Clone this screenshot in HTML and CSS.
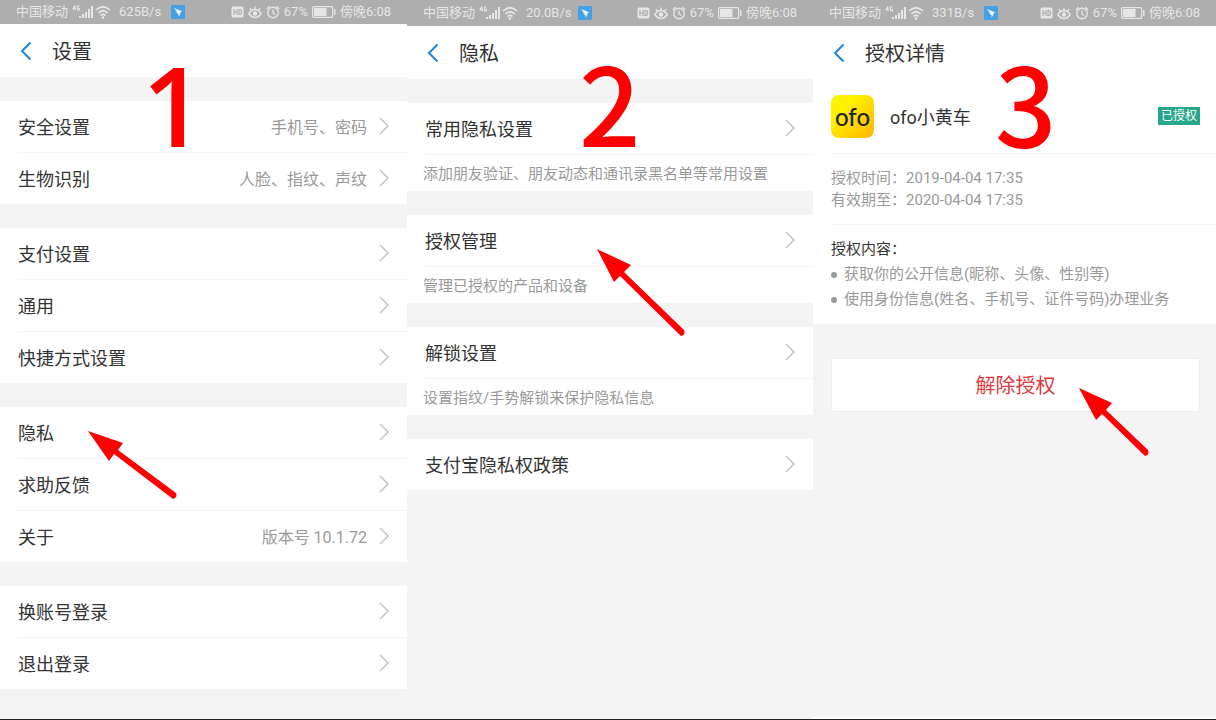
FILE: index.html
```html
<!DOCTYPE html>
<html lang="zh-CN">
<head>
  <meta charset="UTF-8" />
  <title>支付宝解除 ofo 授权步骤</title>
  <meta name="viewport" content="width=device-width, initial-scale=1.0" />
  <link rel="stylesheet" href="styles.css">
</head>
<body>

<!-- Shared icons -->
<svg class="sprite" aria-hidden="true">
  <symbol id="signal" viewBox="0 0 21 16">
    <path fill="none" stroke="currentColor" stroke-width="1.100" d="M3 1.500L1 4.800h3M3 1.500v5M7.500 2H5.500v4h2V4.300h-1" />
    <path fill="currentColor" d="M7 12h2v2H7zM10 10h2v4h-2zM13 8h2v6h-2zM16 5h2v9h-2zM19 2h2v12h-2z" />
  </symbol>
  <symbol id="wifi" viewBox="0 0 16 14">
    <g fill="none" stroke="currentColor" stroke-width="1.700">
      <path d="M1 5Q8 -1.500 15 5M3.300 8Q8 3.500 12.700 8M5.500 10.500Q8 8 10.500 10.500" />
    </g>
    <circle cx="8" cy="12.500" r="1.300" fill="currentColor" />
  </symbol>
  <symbol id="bird" viewBox="0 0 14 14">
    <rect width="14" height="14" rx="1" fill="#45a0e6" />
    <path fill="#eef6fc" d="M3 3l8 3.200-2 1.800.600.800-2.100 2.700V9L6 8.500l.700-.800L4.500 7l1.200-.500z" />
  </symbol>
  <symbol id="hd" viewBox="0 0 13 12">
    <rect x="0.500" y="0.500" width="12" height="11" rx="1.500" fill="currentColor" />
    <path fill="none" stroke="#aeaeae" stroke-width="1.200" d="M3 3v6M6 3v6M3 6h3M8 3.500v5h1q1.500 0 1.500-2.500T9 3.500z" />
  </symbol>
  <symbol id="eye" viewBox="0 0 14 14">
    <path fill="none" stroke="currentColor" stroke-width="1.400" d="M.800 8.500Q3.500 4.500 7 4.500T13.200 8.500Q10.500 12.500 7 12.500T.800 8.500zM7 4.500V1.500M3.500 5.500L2 3M10.500 5.500L12 3" />
    <circle cx="7" cy="8.500" r="2.200" fill="currentColor" />
  </symbol>
  <symbol id="alarm" viewBox="0 0 14 14">
    <g fill="none" stroke="currentColor" stroke-width="1.400">
      <circle cx="7" cy="7.500" r="5.200" />
      <path d="M7 4.500v3.200l2 1.800M.800 4L3.700 1.200M13.200 4l-2.900-2.800" />
    </g>
  </symbol>
  <symbol id="battery" viewBox="0 0 24 12">
    <rect x="0.600" y="0.600" width="20" height="10.800" rx="1" fill="none" stroke="currentColor" stroke-width="1.200" />
    <rect x="2" y="2" width="12.500" height="8" fill="currentColor" />
    <rect x="22" y="3" width="1.500" height="6" fill="currentColor" />
  </symbol>
  <symbol id="back" viewBox="0 0 12 20">
    <path fill="none" stroke="#1a88e0" stroke-width="2" d="M10.500 1.500L2 10l8.500 8.500" />
  </symbol>
  <symbol id="chevron" viewBox="0 0 12 18">
    <path fill="none" stroke="#c4c4c4" stroke-width="1.500" d="M2 1l8 8-8 8" />
  </symbol>
  <symbol id="arrow-flat" viewBox="0 0 90 68">
    <path fill="#f00" d="M0 0l35 12-5 7 58 43q2 4-3 6L26 23l-5 7z" />
  </symbol>
  <symbol id="arrow-steep" viewBox="0 0 90 88">
    <path fill="#f00" d="M0 0l34 16-7 7 60 58q2 5-3 6L23 27l-6 6z" />
  </symbol>
  <symbol id="arrow-short" viewBox="0 0 72 70">
    <path fill="#f00" d="M0 0l33 15-6 7 42 40q2 5-3 6L23 26l-6 6z" />
  </symbol>
</svg>

<main class="steps">

  <!-- Step 1: settings -->
  <section class="phone">
    <div class="status">
      <span class="carrier">中国移动</span>
      <svg class="signal"><use href="#signal" /></svg>
      <svg class="wifi"><use href="#wifi" /></svg>
      <span class="speed">625B/s</span>
      <svg class="bird"><use href="#bird" /></svg>
      <span class="status-right">
        <svg class="hd"><use href="#hd" /></svg>
        <svg class="eye"><use href="#eye" /></svg>
        <svg class="alarm"><use href="#alarm" /></svg>
        <span>67%</span>
        <svg class="battery"><use href="#battery" /></svg>
        <span>傍晚6:08</span>
      </span>
    </div>
    <header class="title-bar">
      <a class="back" href="#" aria-label="返回"><svg><use href="#back" /></svg></a>
      <h1>设置</h1>
    </header>
    <nav class="groups">
      <div class="group">
        <a class="row" href="#"><span>安全设置</span><span class="value">手机号、密码</span><svg class="chevron"><use href="#chevron" /></svg></a>
        <a class="row" href="#"><span>生物识别</span><span class="value">人脸、指纹、声纹</span><svg class="chevron"><use href="#chevron" /></svg></a>
      </div>
      <div class="group">
        <a class="row" href="#"><span>支付设置</span><svg class="chevron"><use href="#chevron" /></svg></a>
        <a class="row" href="#"><span>通用</span><svg class="chevron"><use href="#chevron" /></svg></a>
        <a class="row" href="#"><span>快捷方式设置</span><svg class="chevron"><use href="#chevron" /></svg></a>
      </div>
      <div class="group">
        <a class="row" href="#"><span>隐私</span><svg class="chevron"><use href="#chevron" /></svg></a>
        <a class="row" href="#"><span>求助反馈</span><svg class="chevron"><use href="#chevron" /></svg></a>
        <a class="row" href="#"><span>关于</span><span class="value">版本号 10.1.72</span><svg class="chevron"><use href="#chevron" /></svg></a>
      </div>
      <div class="group">
        <a class="row" href="#"><span>换账号登录</span><svg class="chevron"><use href="#chevron" /></svg></a>
        <a class="row" href="#"><span>退出登录</span><svg class="chevron"><use href="#chevron" /></svg></a>
      </div>
    </nav>
    <span class="step-number step-one">1</span>
    <svg class="arrow arrow-one"><use href="#arrow-flat" /></svg>
  </section>

  <!-- Step 2: privacy -->
  <section class="phone tall-status">
    <div class="status">
      <span class="carrier">中国移动</span>
      <svg class="signal"><use href="#signal" /></svg>
      <svg class="wifi"><use href="#wifi" /></svg>
      <span class="speed">20.0B/s</span>
      <svg class="bird"><use href="#bird" /></svg>
      <span class="status-right">
        <svg class="hd"><use href="#hd" /></svg>
        <svg class="eye"><use href="#eye" /></svg>
        <svg class="alarm"><use href="#alarm" /></svg>
        <span>67%</span>
        <svg class="battery"><use href="#battery" /></svg>
        <span>傍晚6:08</span>
      </span>
    </div>
    <header class="title-bar">
      <a class="back" href="#" aria-label="返回"><svg><use href="#back" /></svg></a>
      <h1>隐私</h1>
    </header>
    <nav class="groups">
      <div class="group">
        <a class="row" href="#"><span>常用隐私设置</span><svg class="chevron"><use href="#chevron" /></svg></a>
        <p class="hint">添加朋友验证、朋友动态和通讯录黑名单等常用设置</p>
      </div>
      <div class="group">
        <a class="row" href="#"><span>授权管理</span><svg class="chevron"><use href="#chevron" /></svg></a>
        <p class="hint">管理已授权的产品和设备</p>
      </div>
      <div class="group">
        <a class="row" href="#"><span>解锁设置</span><svg class="chevron"><use href="#chevron" /></svg></a>
        <p class="hint">设置指纹/手势解锁来保护隐私信息</p>
      </div>
      <div class="group">
        <a class="row" href="#"><span>支付宝隐私权政策</span><svg class="chevron"><use href="#chevron" /></svg></a>
      </div>
    </nav>
    <span class="step-number step-two">2</span>
    <svg class="arrow arrow-two"><use href="#arrow-steep" /></svg>
  </section>

  <!-- Step 3: authorization detail -->
  <section class="phone tall-status last">
    <div class="status">
      <span class="carrier">中国移动</span>
      <svg class="signal"><use href="#signal" /></svg>
      <svg class="wifi"><use href="#wifi" /></svg>
      <span class="speed">331B/s</span>
      <svg class="bird"><use href="#bird" /></svg>
      <span class="status-right">
        <svg class="hd"><use href="#hd" /></svg>
        <svg class="eye"><use href="#eye" /></svg>
        <svg class="alarm"><use href="#alarm" /></svg>
        <span>67%</span>
        <svg class="battery"><use href="#battery" /></svg>
        <span>傍晚6:08</span>
      </span>
    </div>
    <header class="title-bar">
      <a class="back" href="#" aria-label="返回"><svg><use href="#back" /></svg></a>
      <h1>授权详情</h1>
    </header>
    <div class="detail">
      <div class="app">
        <span class="app-icon">ofo</span>
        <span class="app-name">ofo小黄车</span>
        <span class="badge">已授权</span>
      </div>
      <div class="times">
        <p>授权时间：<span>2019-04-04 17:35</span></p>
        <p>有效期至：<span>2020-04-04 17:35</span></p>
      </div>
      <div class="scope">
        <h2>授权内容：</h2>
        <ul>
          <li>获取你的公开信息(昵称、头像、性别等)</li>
          <li>使用身份信息(姓名、手机号、证件号码)办理业务</li>
        </ul>
      </div>
    </div>
    <button class="revoke" type="button">解除授权</button>
    <span class="step-number step-three">3</span>
    <svg class="arrow arrow-three"><use href="#arrow-short" /></svg>
  </section>

</main>

</body>
</html>
```
FILE: styles.css
```css
* {
  box-sizing: border-box;
}

body {
  margin: 0;
  background-color: #f4f4f4;
  color: #333;
  font-family: Roboto, "Noto Sans CJK SC", sans-serif;
  font-weight: 400;
}

h1, h2, p, ul {
  margin: 0;
  padding: 0;
  font-weight: inherit;
}

a {
  color: inherit;
  text-decoration: none;
}

svg {
  display: block;
  flex: none;
}

.sprite {
  display: none;
}

.steps {
  display: grid;
  grid-template-columns: 407fr 406fr 403fr;
  min-height: 100vh;
  border-bottom: 1px solid #222;
}

.phone {
  position: relative;
  min-width: 0;
}

.last {
  border-bottom: 2px solid #fff;
}

/* Status bar */
.status {
  display: flex;
  align-items: center;
  height: 24px;
  padding: 0 16px;
  background-color: #aeaeae;
  color: #e6e6e6;
  font-size: 13px;
  line-height: 16px;
  white-space: nowrap;
}

.tall-status .status {
  height: 26px;
}

.signal {
  width: 21px;
  height: 16px;
  margin-left: 4px;
}

.wifi {
  width: 16px;
  height: 14px;
  margin-left: 2px;
}

.speed {
  width: 52px;
  margin-left: 8px;
}

.bird {
  width: 14px;
  height: 14px;
}

.status-right {
  display: flex;
  align-items: center;
  gap: 4px;
  margin-left: auto;
}

.hd {
  width: 13px;
  height: 12px;
}

.eye,
.alarm {
  width: 14px;
  height: 14px;
}

.battery {
  width: 24px;
  height: 12px;
}

/* Title bar */
.title-bar {
  display: flex;
  align-items: center;
  height: 53px;
  padding: 0 20px;
  background-color: #fff;
}

.back svg {
  width: 12px;
  height: 20px;
}

h1 {
  margin-left: 20px;
  padding-top: 3px;
  font-size: 20px;
  line-height: 28px;
}

/* Grouped lists */
.groups {
  display: flex;
  flex-direction: column;
  gap: 24px;
  padding-top: 24px;
}

.group {
  padding-left: 18px;
  background-color: #fff;
}

.row {
  display: flex;
  align-items: center;
  height: 51px;
  padding: 0 17px 2px 0;
  font-size: 18px;
}

.row:not(:last-child) {
  height: 52px;
  border-bottom: 1px solid #f4f4f4;
}

.value {
  margin-left: auto;
  color: #999;
  font-size: 16px;
}

.chevron {
  width: 12px;
  height: 18px;
  margin-left: auto;
}

.value + .chevron {
  margin-left: 11px;
}

.hint {
  margin-left: -2px;
  padding: 9px 0 7px;
  color: #999;
  font-size: 15px;
  line-height: 20px;
}

/* Authorization detail */
.detail {
  padding-left: 18px;
  background-color: #fff;
}

.app {
  display: flex;
  align-items: center;
  height: 75px;
  padding-right: 16px;
  border-bottom: 1px solid #f4f4f4;
}

.app-icon {
  width: 43px;
  height: 43px;
  border-radius: 8px;
  background: linear-gradient(135deg, #fff200 30%, #ffb400);
  color: #222;
  font-family: Lato, sans-serif;
  font-size: 24px;
  font-weight: 500;
  line-height: 43px;
  text-align: center;
}

.app-name {
  margin-left: 16px;
  font-size: 18px;
}

.badge {
  margin-left: auto;
  padding: 1px 3px 0;
  background-color: #26a78c;
  color: #fff;
  font-size: 12px;
  line-height: 17px;
}

.times {
  padding: 13px 0;
  border-bottom: 1px solid #f4f4f4;
  color: #999;
  font-size: 15px;
  line-height: 22px;
}

.scope {
  padding: 12px 0;
  color: #999;
  font-size: 15px;
  line-height: 25px;
}

h2 {
  color: #333;
  font-size: 15px;
}

li {
  display: flex;
  align-items: center;
  gap: 7px;
}

li::before {
  content: "";
  width: 6px;
  height: 6px;
  border-radius: 50%;
  background-color: #999;
}

.revoke {
  display: block;
  width: calc(100% - 34px);
  height: 54px;
  margin: 34px 16px 0 18px;
  padding: 0 0 2px;
  border: 1px solid #eee;
  border-radius: 3px;
  background-color: #fff;
  color: #e0383f;
  font-family: inherit;
  font-size: 20px;
  font-weight: inherit;
}

/* Red step numbers and arrows over the screens */
.step-number {
  position: absolute;
  top: 45px;
  color: #f00;
  font-family: "Noto Sans CJK SC", sans-serif;
  font-size: 108px;
  font-weight: 500;
  line-height: 110px;
}

/* plain "1" without a foot */
.step-one {
  top: 49px;
  left: 142px;
  font-family: "Open Sans", sans-serif;
  font-size: 110px;
  font-weight: 600;
}

.step-two {
  left: 172px;
}

.step-three {
  left: 182px;
}

.arrow {
  position: absolute;
  width: 90px;
  height: 88px;
}

.arrow-one {
  top: 431px;
  left: 88px;
  height: 68px;
}

.arrow-two {
  top: 249px;
  left: 190px;
}

.arrow-three {
  top: 388px;
  left: 266px;
  width: 72px;
  height: 70px;
}
```
